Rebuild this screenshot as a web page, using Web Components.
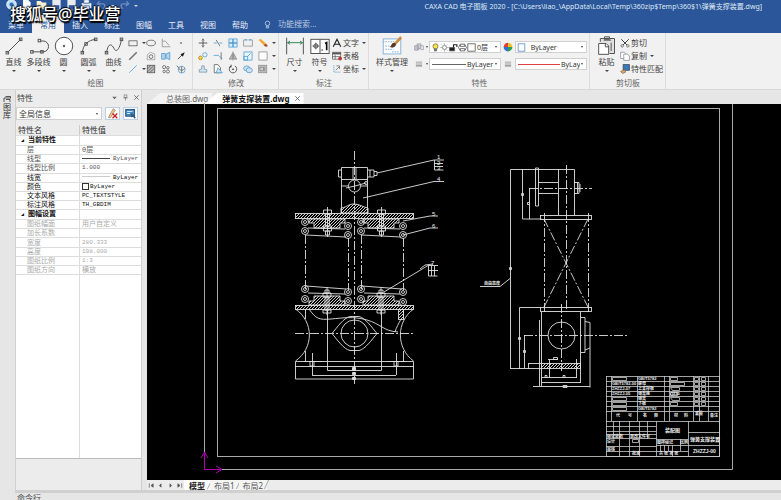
<!DOCTYPE html>
<html lang="zh-CN">
<head>
<meta charset="utf-8">
<title>CAXA CAD 电子图板 2020</title>
<style>
html,body{height:100%;margin:0}
body{font:8px/10px "Noto Sans","Noto Sans CJK SC",sans-serif;color:#444;background:#e6e6e6;overflow:hidden}
</style>
</head>
<body>
<cad-app></cad-app>
<script>
const g='#555',b='#4a9ad0';
const ICONS={
line:'<path d="M4 20L20 4"/><rect x="2.500" y="18.500" width="3" height="3"/><rect x="18.500" y="2.500" width="3" height="3"/>',
pline:'<path d="M4 19h13a6 6 0 0 0 0-13H14"/><rect x="2" y="17.500" width="3" height="3"/><rect x="14" y="17.500" width="3" height="3"/><rect x="11" y="4" width="3" height="3"/>',
circle:'<circle cx="12" cy="12" r="10.500" fill="#fff"/><circle cx="12" cy="12" r="1" fill="#444"/>',
arc:'<path d="M4 20C5 10 11 5 20 4"/><rect x="2.500" y="18.500" width="3" height="3"/><rect x="7" y="8" width="3" height="3"/><rect x="18.500" y="2.500" width="3" height="3"/>',
curve:'<path d="M3 20C5 8 9 9 12 15S19 15 21 4"/><rect x="1.500" y="18.500" width="3" height="3"/><rect x="19.500" y="2.500" width="3" height="3"/>',
dim:'<path d="M2 2v20M22 2v20"/><path d="M3 8h18M6 6L3 8l3 2M18 6l3 2-3 2" stroke="#3c8a5c"/>',
sym:'<rect x="1" y="4" width="22" height="17" fill="#fff"/><path d="M12 4v17M3 12h8M7 8v8"/><circle cx="7" cy="12" r="2.500"/><path d="M14 17h1M18 9l2-1v9" stroke="#111" stroke-width="2"/>',
style:'<rect x="1.500" y="3.500" width="21" height="18" fill="#fff" stroke="#8ab4d8"/><path d="M1 7h14M4 12h5M4 16h10M12 19h8" stroke="#8ab4d8" stroke-dasharray="2 1"/><path d="M22 0l-8 9 2 2 8-8z" fill="#d08a3c" stroke="none"/><path d="M15 8c-4 0-3 4-6 5 3 2 7 1 8-3z" fill="#553a2c" stroke="none"/>',
paste:'<path d="M4 7V3h17v18h-6M9 4V1h6v3z" fill="#e2e2e2"/><path d="M8 5h9M17 8v10"/><path d="M2 9h9l3 3v10H2z" fill="#fff"/><path d="M10 9v4h4"/>',
rect:`<rect x="1.500" y="4.500" width="13" height="8"/>`,
hatchline:'<path d="M2 14L14 2" stroke="#777" stroke-width="2.500"/>',
ray:`<path d="M2 14L14 2" stroke="${b}"/>`,
ellipse:'<ellipse cx="8" cy="8" rx="7" ry="4.500"/>',
region:'<path d="M2 14V6l5-4 7 3v9z" stroke="#999"/><circle cx="8" cy="9" r="3"/>',
hatch:'<rect x="2" y="2" width="12" height="12" fill="#bbb"/><path d="M2 8l6-6M2 13L13 2M6 14l8-8"/>',
angle:'<path d="M2 1v13h13M2 5h5l6 7" stroke="#888"/>',
fill:`<path d="M1 4h6v9H1zM8 5l6-3v12l-6-3z" fill="#b8d4e8" stroke="${b}"/>`,
gears:`<circle cx="5" cy="5" r="2.500"/><circle cx="11" cy="6" r="2"/><circle cx="5" cy="12" r="2"/><circle cx="11" cy="12" r="2.500"/>`,
point:'<circle cx="8" cy="8" r="1.200" fill="#222" stroke="none"/>',
arrow:'<path d="M3 13L12 4" stroke="#222"/><path d="M14 2L7 5l4 4z" fill="#222" stroke="none"/>',
globe:`<circle cx="9" cy="9" r="5.500" stroke="${b}"/><path d="M4 8c4 3 8 2 10-1M9 4v10M1 3l5 4"/>`,
move:'<path d="M8 1v14M1 8h14" stroke="#333"/><path d="M6 4l2-2 2 2M6 12l2 2 2-2"/>',
trim:`<path d="M1 8h5M10 8h5" stroke="${b}"/><path d="M5 3l6 10" stroke="#555"/>`,
array:`<rect x="1.500" y="1.500" width="6" height="6" fill="#dceefa" stroke="${b}"/><rect x="8.500" y="1.500" width="6" height="6" fill="#dceefa" stroke="${b}"/><rect x="1.500" y="8.500" width="6" height="6" fill="#dceefa" stroke="${b}"/><rect x="8.500" y="8.500" width="6" height="6" fill="#dceefa" stroke="${b}"/>`,
brk:`<path d="M5 3H1v10h14V3h-4" stroke="#888"/><path d="M4 3h3M9 3h3" stroke="${b}" stroke-width="2"/>`,
eraser:'<path d="M1 3l3-2 10 9-3 3z" fill="#f0a830" stroke="none"/><path d="M9 11l3 3 4-1-3-4z" fill="#a0522d" stroke="none"/>',
copy2:`<circle cx="4" cy="11" r="3" fill="#f4d040" stroke="#b08a10"/><circle cx="11" cy="6" r="3.500" stroke="${b}"/>`,
extend:`<path d="M1 7h8M9 7l6 6" stroke="${b}"/><path d="M13 2v12"/>`,
mirror:'<path d="M8 1v14"/><path d="M7 4v9H2zM9 4v9h5z" fill="#bbb" stroke="#888"/>',
scale:`<rect x="1.500" y="1.500" width="13" height="13" fill="#e6f4fc" stroke="${b}"/><rect x="1.500" y="8.500" width="6" height="6" stroke="${b}"/><path d="M8 8l4-4" stroke="${b}"/>`,
box:'<rect x="1.500" y="1.500" width="13" height="13" fill="#fff" stroke="#888"/>',
stretch:`<path d="M2 13h12V9l-4-1V3H6v5L2 9z" fill="#cfe2ef" stroke="#7a94a8"/>`,
offset:`<path d="M2 1h6l4 5v8H2z" fill="#fff"/><path d="M5 14l3-8 7 8z" fill="#cfe2ef" stroke="${b}"/>`,
rotate:'<path d="M5 3a6 6 0 1 0 6 0" stroke="#333"/><path d="M5 1v4H2" stroke="#333"/><circle cx="8" cy="8.500" r="1" fill="#333"/>',
block:`<ellipse cx="6" cy="7" rx="5" ry="4" fill="#cfe2ef" stroke="${b}"/><ellipse cx="10" cy="10" rx="5" ry="4" fill="#cfe2ef" stroke="${b}"/>`,
frame:'<rect x="1" y="2" width="13" height="12" fill="#ccc" stroke="#888"/><path d="M3 5h6v6H3zM11 4v8" stroke="#777"/>',
A:'<path d="M2 14L8 2l6 12M4 10h8" stroke="#222" stroke-width="1.800"/>',
table:'<rect x="1" y="2" width="13" height="11" fill="#fff"/><path d="M1 4h13" stroke-width="3"/><path d="M5 6v7M1 9h13"/><circle cx="13" cy="12" r="3" fill="#b33" stroke="none"/>',
coord:`<path d="M3 2v11h11" stroke="${b}" stroke-dasharray="2 1"/><path d="M6 10l6-6M7 3h5v5" stroke="#666"/>`,
layers:'<path d="M1 6h6v7H1zM5 3h6v8H5z" fill="#c8ccd4" stroke="#99a"/><path d="M11 6h4v6h-4" stroke="#99a"/>',
lines:'<path d="M3 5h10M3 8h10" stroke="#888"/><path d="M3 11h10" stroke="#888" stroke-width="2"/>',
bulb:'<circle cx="8" cy="6" r="4.500" fill="#ffe640"/><path d="M6 11h4v3H6z" fill="#777"/>',
idea:'<circle cx="8" cy="6" r="4" stroke="#dce6f4"/><path d="M6 11h4v3H6z" stroke="#dce6f4"/>',
sun:'<circle cx="8" cy="8" r="3.500"/><path d="M8 1v2M8 13v2M1 8h2M13 8h2M3 3l1 1M12 12l1 1M3 13l1-1M12 4l1-1"/>',
lock:'<path d="M1 8h9v6H1z" fill="#222"/><path d="M8 8V3h6v4" stroke="#222" stroke-width="2"/>',
printer:'<ellipse cx="8" cy="8" rx="7" ry="5" stroke="#333"/><path d="M4 2h8v4H4zM4 10h8v4H4z" fill="#fff" stroke="#333"/>',
sq:'<rect x="1.500" y="1.500" width="13" height="13" fill="#fff" stroke="#333"/>',
bsq:'<rect x="2" y="1.500" width="12" height="13" fill="#fff" stroke="#3a78c0"/>',
wheel:'<path d="M8 8L8 1A7 7 0 0 1 15 8z" fill="#e8c030" stroke="none"/><path d="M8 8H15A7 7 0 0 1 8 15z" fill="#30a050" stroke="none"/><path d="M8 8V15A7 7 0 0 1 1 8z" fill="#3070d0" stroke="none"/><path d="M8 8H1A7 7 0 0 1 8 1z" fill="#e04030" stroke="none"/>',
cut:'<path d="M2 2l9 9M14 2L5 11" stroke="#444" stroke-width="1.600"/><circle cx="3.500" cy="12.500" r="2"/><circle cx="12.500" cy="12.500" r="2"/>',
copy:'<path d="M1 2h6l2 2v8H1z" fill="#fff" stroke="#889"/><path d="M6 5h6l3 3v7H6z" fill="#fff" stroke="#889"/>',
match:'<rect x="5" y="1" width="10" height="9" fill="#3c78b8" stroke="#345"/><path d="M1 12l6-3 2 4-5 2z" fill="#e0b060" stroke="#865"/>',
doc:'<path d="M3 1h7l4 4v11H3z" fill="#fff" stroke="none"/>',
folder:'<path d="M1 3h6l2 2h6v10H1z" fill="#f4f0d0" stroke="none"/>',
save:'<path d="M2 1h12v14H2z" fill="#e8eaf0" stroke="none"/><path d="M4 9h8v6H4z" fill="#2b579a" stroke="none"/>',
print:'<path d="M1 6h14v7H1z" fill="#e8eaf0" stroke="none"/><path d="M4 1h8v5H4zM4 10h8v5H4z" fill="#fff" stroke="#2b579a"/>',
undo:'<path d="M5 3L2 7l4 3M2 7h8c4 0 4 6 0 7" stroke="#6d8cc0" stroke-width="2"/>',
redo:'<path d="M11 3l3 4-4 3M14 7H6c-4 0-4 6 0 7" stroke="#6d8cc0" stroke-width="2"/>',
orb:'<circle cx="8" cy="8" r="7" fill="#bfe0f8" stroke="#fff"/><circle cx="8" cy="8" r="3" fill="#2c74c0" stroke="none"/>',
down:'<path d="M3 6h10l-5 6z" fill="#666" stroke="none"/>',
pin:'<path d="M5 2h6v6H5zM3 9h10M8 9v6"/>',
x:'<path d="M3 3l10 10M13 3L3 13" stroke-width="1.800"/>',
pick:'<path d="M2 14L9 1l3 2-7 11z" fill="#f0c890" stroke="#a86"/><path d="M8 8l7 7M15 8l-7 7" stroke="#c22" stroke-width="2"/>',
filter:'<rect x="1" y="2" width="13" height="10" fill="#3c8ac8" stroke="#246"/><path d="M3 5h8M3 8h5" stroke="#fff"/><path d="M8 8l7 7M9 13l5-4" stroke="#357" stroke-width="2"/>',
rail:'<path d="M2 14V6h12M5 3h10v4M6 9h8v5" stroke="#333" stroke-width="1.600"/>',
first:'<path d="M4 4v8"/><path d="M11 5v6L7 8z" fill="#555"/>',prev:'<path d="M9 5v6L6 8z" fill="#555"/>',
next:'<path d="M7 5v6l3-3z" fill="#555"/>',last:'<path d="M12 4v8"/><path d="M5 5v6l4-3z" fill="#555"/>'
};
const BIG=new Set(['line','pline','circle','arc','curve','dim','sym','style','paste']);
function define(name,html,setup){
  customElements.define(name,class extends HTMLElement{
    constructor(){super();this.attachShadow({mode:'open'})}
    connectedCallback(){
      if(this.shadowRoot.childNodes.length)return;
      const t=document.createElement('template');
      t.innerHTML=typeof html==='function'?html(this):html;
      this.shadowRoot.append(t.content.cloneNode(true));
      if(setup)setup(this);
    }
  });
}
const BTN='button{font:inherit;color:inherit;background:none;border:0;padding:0;margin:0;cursor:pointer}';
const CARET='.caret{border:2px solid transparent;border-top-color:#444;border-bottom:0;width:0;height:0;flex:none}';
define('ui-icon',e=>{const n=e.getAttribute('name'),v=BIG.has(n)?24:16;return `<style>:host{display:block;width:var(--s,12px);height:var(--s,12px);flex:none}svg{display:block;width:100%;height:100%}</style><svg viewBox="0 0 ${v} ${v}" fill="none" stroke="${g}" stroke-width="1.200" aria-hidden="true">${ICONS[n]}</svg>`});

define('title-bar',`<style>:host{display:flex;height:15px;justify-content:space-between;color:#dfe7f3;padding:0 19px 0 6px}
${BTN} nav{display:flex;gap:4px;overflow:hidden;align-items:flex-start}button{--s:11px;margin-top:-1px}p{margin:0;padding-top:2px;white-space:nowrap;font-size:7px}
.caret{border:2px solid transparent;border-top-color:#cdd8ea;border-bottom:0;height:0;margin-top:5px}</style>
<nav>${['orb','doc','folder','save','save','print','undo'].map(n=>`<button aria-label="${n}"><ui-icon name="${n}"></ui-icon></button>`).join('')}<i class="caret"></i><button aria-label="redo"><ui-icon name="redo"></ui-icon></button><i class="caret"></i></nav>
<p>CAXA CAD 电子图板 2020 - [C:\\Users\\liao_\\AppData\\Local\\Temp\\360zip$Temp\\360$1\\弹簧支撑装置.dwg]</p>`);

define('menu-bar',`<style>:host{display:flex;height:18px;color:#e8eef8}${BTN}
button{width:32px;padding:3px 0 1px}button:first-child{padding-right:4px}.on{background:#f1f1f1;color:#2b579a}
label{display:flex;align-items:center;gap:6px;padding:0 0 0 7px;--s:9px}input{font:inherit;color:#c9d6ea;background:none;border:0;padding:0;width:60px;outline:0}input::placeholder{color:#b9c8e0}</style>
${['菜单','常用','插入','标注','图幅','工具','视图','帮助'].map((t,i)=>`<button class="${i==1?'on':''}">${t}</button>`).join('')}<label><ui-icon name="idea"></ui-icon><input placeholder="功能搜索..." aria-label="功能搜索"></label>`);

define('ribbon-group',e=>`<style>:host{display:flex;flex-direction:column;border-right:1px solid #dcdcdc;padding:3px 2px 0 var(--l,3px)}
.c{display:flex;height:41px}h2{font:inherit;text-align:center;margin:1px 0 0;color:#666}</style><div class="c"><slot></slot></div><h2>${e.getAttribute('label')}</h2>`);

define('tool-button',e=>`<style>:host{display:block;width:var(--w,25px)}${BTN}${CARET}
button{width:100%;height:100%;display:flex;flex-direction:column;align-items:center;white-space:nowrap;--s:20px}.t{margin-top:1px}.caret{margin-top:3px}</style>
<button><ui-icon name="${e.getAttribute('icon')}"></ui-icon><span class="t"><slot></slot></span><i class="caret"></i></button>`);

define('tool-grid',e=>{const items=e.getAttribute('icons').split(' ');return `<style>:host{display:grid;grid-template-columns:${e.getAttribute('cols')};grid-template-rows:repeat(3,13px);padding-top:0}${BTN}${CARET}
button{display:flex;align-items:center;justify-content:flex-start;gap:4px;padding-left:2px;--s:10px}</style>${items.map(n=>{const d=n.endsWith('+'),k=n.replace('+','');return `<button aria-label="${k}"><ui-icon name="${k}"></ui-icon>${d?'<i class="caret"></i>':''}</button>`}).join('')}`});

define('tool-list',e=>`<style>:host{display:grid;grid-template-rows:repeat(3,13px)}${BTN}${CARET}
button{display:flex;align-items:center;gap:1px;--s:10px;white-space:nowrap}.caret{margin-left:2px}</style>${e.getAttribute('items').split(' ').map(s=>{const[n,t,d]=s.split(':');return `<button><ui-icon name="${n}"></ui-icon>${t}${d?'<i class="caret"></i>':''}</button>`}).join('')}`);

define('combo-box',e=>`<style>:host{display:flex;align-items:center;width:72px;height:12px;box-sizing:border-box;background:#fff;border:1px solid #d0d0d0;position:relative;--s:9px;padding-left:1px}
${CARET}select{appearance:none;flex:1;min-width:0;font:inherit;font-size:var(--f,7px);line-height:9px;color:#333;border:0;background:none;padding:0 0 0 1px;outline:0;height:10px}
.caret{margin:0 3px 0 1px;border-width:2px 1px 0}</style><slot></slot><select aria-label="${e.getAttribute('label')}"><option>${e.getAttribute('value')}</option></select><i class="caret"></i>`);

define('prop-tools',`<style>:host{display:grid;grid-template-columns:17px 72px 14px 72px;grid-template-rows:12px 12px;row-gap:5px;padding-top:5px;align-items:center}
${BTN}${CARET}button{display:flex;align-items:center;justify-content:center;gap:2px;--s:10px}button .caret{border-width:2px 1px 0}
.ln{width:34px;border-top:1px solid #666;margin-left:1px}.red{width:42px;border-color:#e04040}</style>
<button aria-label="图层"><ui-icon name="layers"></ui-icon><i class="caret"></i></button>
<combo-box label="图层" value="0层"><ui-icon name="bulb"></ui-icon><ui-icon name="sun"></ui-icon><ui-icon name="lock"></ui-icon><ui-icon name="printer"></ui-icon><ui-icon name="sq"></ui-icon></combo-box>
<button aria-label="颜色"><ui-icon name="wheel"></ui-icon></button>
<combo-box label="颜色" value="&nbsp; ByLayer"><ui-icon name="bsq"></ui-icon></combo-box>
<button aria-label="线型"><ui-icon name="lines"></ui-icon><i class="caret"></i></button>
<combo-box label="线型" value="ByLayer"><i class="ln"></i></combo-box>
<button aria-label="线宽"><ui-icon name="lines"></ui-icon></button>
<combo-box label="线宽" value="ByLayer"><i class="ln red"></i></combo-box>`);

define('ribbon-bar',`<style>:host{display:flex;height:57px;background:#f1f1f1;border-bottom:1px solid #d8d8d8;box-sizing:border-box}</style>
<ribbon-group label="绘图" style="--l:1px"><tool-button icon="line">直线</tool-button><tool-button icon="pline">多段线</tool-button><tool-button icon="circle">圆</tool-button><tool-button icon="arc">圆弧</tool-button><tool-button icon="curve">曲线</tool-button>
<tool-grid cols="18px 15px 15px 16px" icons="rect+ ellipse angle point hatchline region fill arrow ray+ hatch gears globe"></tool-grid></ribbon-group>
<ribbon-group label="修改"><tool-grid cols="15px 15px 15px 15px 20px" icons="move trim array brk eraser+ copy2 extend mirror scale box+ stretch offset rotate block frame+"></tool-grid></ribbon-group>
<ribbon-group label="标注"><tool-button icon="dim">尺寸</tool-button><tool-button icon="sym">符号</tool-button><tool-list items="A:文字:1 table:表格 coord:坐标:1"></tool-list></ribbon-group>
<ribbon-group label="特性"><tool-button icon="style" style="--w:40px">样式管理</tool-button><prop-tools></prop-tools></ribbon-group>
<ribbon-group label="剪切板"><tool-button icon="paste" style="--w:27px">粘贴</tool-button><tool-list items="cut:剪切 copy:复制:1 match:特性匹配"></tool-list></ribbon-group>`);

const ROWS=[['h','当前特性'],['n','层','0层'],['n','线型','<span class="l"></span>ByLayer'],['n','线型比例','1.000'],['k','线宽','<span class="l t"></span>ByLayer'],['k','颜色','<span class="q"></span>ByLayer'],['k','文本风格','PC_TEXTSTYLE'],['k','标注风格','TH_GBDIM'],['h','图幅设置'],['d','图纸幅面','用户自定义'],['d','加长系数',''],['d','宽度','280.333'],['d','高度','198.000'],['d','图纸比例','1:3'],['d','图纸方向','横放']];
define('property-panel',`<style>:host{display:flex;flex-direction:column;border:1px solid #cfcfcf;border-width:0 1px;background:#ececec;min-height:0}${BTN}${CARET}
header{display:flex;align-items:center;height:13px;padding:0 1px 1px 1px;gap:4px;--s:7px}h2{font:inherit;margin:0;flex:1}
.bar{display:flex;gap:3px;padding:2px 3px 5px 0;--s:11px}.bar combo-box{flex:1;--f:8px;width:auto;height:13px}.bar button{border:1px solid #b8cfe4;background:#fff;padding:0 1px}
.grid{flex:1;background:linear-gradient(#ddd,#ddd) 63px 0/1px 100% no-repeat #fff;border-bottom:1px solid #bbb;min-height:0}
table{width:100%;border-collapse:collapse;table-layout:fixed;height:150px;font-size:7px;line-height:8px}
th,td{padding:0 0 0 2px;text-align:left;font-weight:400;border-bottom:1px solid #ddd;white-space:nowrap}
th:first-child{width:61px}thead th{background:#ececec;color:#333;font-size:8px;height:10px}thead th+th{border-left:1px solid #ccc}
td{border-left:1px solid #ddd;font-family:"Liberation Mono","Noto Sans CJK SC",monospace;font-size:6px}
tbody th:first-child{padding-left:11px}.n{color:#555}.k{color:#111}.d{color:#aaa}.h{color:#111}tbody .h th:first-child{font-weight:700;padding-left:5px}.h small{font-size:3px;margin-right:4px;font-weight:400}
.l{display:inline-block;width:28px;border-top:1px solid #444;vertical-align:middle;margin-right:3px}.t{border-color:#ccc}.q{display:inline-block;width:5px;height:5px;border:1px solid #333;vertical-align:middle;margin-right:1px}
.c{font-size:7px}footer{height:31px}</style>
<header><h2>特性</h2><button aria-label="菜单"><ui-icon name="down"></ui-icon></button><button aria-label="固定"><ui-icon name="pin"></ui-icon></button><button aria-label="关闭"><ui-icon name="x"></ui-icon></button></header>
<div class="bar"><combo-box label="对象" value="全局信息"></combo-box><button aria-label="清除"><ui-icon name="pick"></ui-icon></button><button aria-label="过滤"><ui-icon name="filter"></ui-icon></button></div>
<div class="grid"><table><thead><tr><th>特性名</th><th>特性值</th></tr></thead><tbody>${ROWS.map(([c,n,v])=>`<tr class="${c}">${c=='h'?`<th colspan="2"><small>◢</small>${n}</th>`:`<th>${n}</th><td class="${/[层户横]/.test(v)?'c':''}">${v}</td>`}</tr>`).join('')}</tbody></table></div><footer></footer>`);

define('sheet-tabs',`<style>:host{display:flex;height:11px}${BTN}
button{position:relative;padding:0 4px 0 19px;height:100%;display:flex;align-items:center;color:#666;background:#f3f3f3;clip-path:polygon(13px 0,100% 0,100% 100%,0 100%)}.on{background:#fff;color:#111;font-weight:700;padding:0 3px 0 18px;margin-left:-8px;gap:4px;--s:7px}</style>
<button>总装图.dwg</button><button class="on">弹簧支撑装置.dwg <ui-icon name="x"></ui-icon></button>`);

define('layout-tabs',`<style>:host{display:flex;height:10px;background:#ececec}${BTN}nav{display:flex;--s:9px;width:37px;justify-content:space-between}
.t{position:relative;padding:0 4px;line-height:9px;color:#555;background:#f4f4f4}.t::after{content:"";position:absolute;right:0;top:0;height:9px;border-right:1px solid #aaa;transform:skewX(-25deg)}
.on{background:#fff;color:#222;font-weight:700;padding:0 5px}</style>
<nav>${['first','prev','next','last'].map(n=>`<button aria-label="${n}"><ui-icon name="${n}"></ui-icon></button>`).join('')}</nav><button class="t on">模型</button><button class="t">布局1</button><button class="t">布局2</button>`);

const coil=(x,y)=>`<circle cx="${x}" cy="${y}" r="3.500"/><circle cx="${x}" cy="${y}" r="1.500"/>`;
const bolt=(x,y)=>`<path d="M${x-4} ${y}h8v4h-8zM${x-2} ${y+4}h4v12h-4zM${x-4} ${y+16}h8v5h-8zM${x-2} ${y+21}h4v4h-4z"/><path d="M${x} ${y-3}v30"/>`;
const block=(x,y,d)=>`<path d="M${x-18} ${y}h36v${4*d}h-5v${5*d}h-26v${-5*d}h-5z" fill="url(#h)"/>`;
const rows=[376,381,386,391,396,401,406,411,421];
define('cad-drawing',`<style>:host{display:block;background:#000;min-height:0;overflow:hidden}svg{display:block;width:100%;height:100%}text{fill:#eee;stroke:none;font-family:"Liberation Sans","Noto Sans CJK SC",sans-serif}.d{stroke-dasharray:9 2 2 2}</style>
<svg viewBox="147 104 634 376" preserveAspectRatio="xMinYMin meet" fill="none" stroke="#e0e0e0" stroke-width="1" role="img" aria-label="弹簧支撑装置">
<defs><pattern id="h" width="3" height="3" patternUnits="userSpaceOnUse"><path d="M0 3L3 0" stroke="#ccc"/></pattern></defs>
<g stroke="#aaa"><path d="M204.500 104V469.500H732.500V104"/><rect x="217.500" y="108.500" width="502" height="348"/></g>
<g stroke="#b000b0"><path d="M204.500 469V452M201 458l3.500-6 3.500 6M204 469.500h18M216 466l6 3.500-6 3.500"/></g>
<g stroke-width=".9">
<path d="M341.500 213V167.500H367.500V213M338.500 170v7h3M338.500 170h3M368 170h6v7h-6M374 171.500h3v4h-3M370 170v7M353 167v12M356 167v12M341 179.500h27M341 186h7M361 186h7"/><circle cx="354.500" cy="186" r="6"/><path d="M346 188l9-2 11-3"/><circle cx="366" cy="183" r="1.500"/>
<path d="M341 213v-5c7-1 7-4 13-4s8 3 14 4v5z" fill="url(#h)"/>
<rect x="295.500" y="213.500" width="118" height="5" fill="url(#h)"/>
${block(327,219,1)}${block(381,219,1)}${bolt(327.5,210)}${bolt(381.5,210)}
${[[305,222],[305,231],[348,226],[348,235],[361,222],[361,231],[403,226],[403,235]].map(p=>coil(...p)).join('')}
<path d="M308 228l37 1M306 235l40 2M364 228l36 1M362 235l39 2"/>
${block(327,305,-1)}${block(381,305,-1)}
<g><path d="M323 293h8v4h-8zM325 297h4v13h-4zM323 310h8v3h-8zM327 287v28M377 293h8v4h-8zM379 297h4v13h-4zM377 310h8v3h-8zM381 287v28M325 290h4v3h-4zM379 290h4v3h-4z"/></g>
${[[305,289],[305,299],[348,292],[348,301],[361,289],[361,299],[403,292],[403,302]].map(p=>coil(...p)).join('')}
<path d="M306 286l40 3M308 293l37 1M362 286l40 3M364 293l36 1"/>
<rect x="295.500" y="305.500" width="118" height="4" fill="url(#h)"/>
<path class="d" d="M354.500 151V384M305.500 235V290M348.500 238V290M361.500 235V290M403.500 238V290M295 333.500H414"/>
<path d="M295.500 309C314 322 314 348 295.500 361M413.500 309C396 322 396 348 413.500 361M305.500 309v10M305.500 351v10M403.500 309v10M403.500 351v10"/>
<path d="M295.500 361.500h118V379h-118zM295 366.500h119M310 361v5h4v-5M394 361v5h4v-5M312.500 353v22M396.500 353v22M304 361.500h18M387 361.500h18"/>
<path d="M327.500 310v60.500h54V310M312 375.500h84"/>
<circle cx="354.500" cy="333.500" r="13.500"/><path d="M332 333.500c5-6 12-16 18-17h9c6 1 13 11 18 17-5 6-12 16-18 17h-9c-6-1-13-11-18-17z"/>
<path d="M309 309c7 10 10 11 22 10s22-3 36 1 16 11 31 12M401 319c-2 4-5 9-6 13"/><rect x="398.500" y="309.500" width="5" height="10" fill="url(#h)"/>
<path d="M352.500 367.500h3v3h-3zM352.500 372.500h3v2h-3zM352.500 377.500h3v2h-3z" fill="#ddd"/>
<path d="M377 173l57-13h10M434.500 160v10h9M434 163.500h9M434 166.500h9M363 198l71-16.500h10M403 221l27-5h8M403 235l27-7h8M384 292l44-26.500h10M428.500 266v10h9M431.500 266v10M434.500 266v10M428 270.500h10M420 269l5-4 8-1"/>
</g>
<g font-size="6"><text x="437" y="159">1</text><text x="437" y="165">2</text><text x="437" y="170">3</text><text x="437" y="181">4</text><text x="432" y="216">5</text><text x="432" y="228">6</text><text x="431" y="265">7</text></g>
<g stroke-width=".9">
<path d="M510.500 369V169.500H574.500V215M558.500 169v46M522.500 169v50h19M529.500 188v31M535.500 168v38h3v-38zM538 182.500h20M538 193.500h20M574 182.500h5v11h-5M577.500 182v11M580 184v8"/>
<rect x="540.500" y="215.500" width="51" height="4"/><rect x="540.500" y="307.500" width="51" height="4"/>
<path class="d" d="M566.500 165V312M544.500 213V312M588.500 213V312M529 188.500h63M544 219l44 88M588 219l-44 88M561.500 304v67M524 335.500H628"/>
<path d="M519.500 369v-61.500h21M524.500 335v33M510 368.500h31M541.500 312v74M539.500 320v66M580.500 312v70M581 317.500h4v35h-4M585 321.500l5 1v65M590 348l-5 2"/>
<circle cx="561.500" cy="335.500" r="13.500"/><rect x="541.500" y="363.500" width="39" height="5" fill="url(#h)"/>
<path d="M549.500 359v19M576.500 359v19M548 359.500h10M541 377.500h36M541 382.500h40M533 386.500h57M528 363.500h13M528.500 363v6"/>
<path d="M521.500 193.500h2v2h-2zM527.500 202.500h2v2h-2zM509.500 267.500h2v2h-2zM518.500 337.500h2v2h-2zM523.500 350.500h2v2h-2zM553.500 357.500h4v2h-4zM545 375.500h2v2h-2zM563 375.500h2v2h-2zM563 385.500h4v2h-4z"/>
<path d="M480 286.500h20l10-8"/></g><text x="484" y="285" font-size="4" font-weight="700">自由高度</text>
<g stroke="#ccc" stroke-width=".8"><path d="M606.500 376V457M719.500 376V457M606 456.500h114"/>
<path d="${rows.map(y=>`M606 ${y+.5}h114`).join('')}M611.500 376v45M637.500 376v45M664.500 376v45M669.500 376v45M693.500 376v45M699.500 376v45M708.500 376v45"/>
<path d="M656.500 421v35M688.500 421v35M606 426.500h50M606 431.500h50M606 434.500h50M606 438.500h50M606 446.500h50M606 451.500h50M613.500 421v18M619.500 421v35M629.500 421v35M639.500 421v35M647.500 421v18M656 439.500h32M656 445.500h32M656 451.500h32M660.500 445v6M664.500 445v6M668.500 445v6M672.500 445v11M680.500 439v12M688 432.500h32M688 445.500h32"/>
<path d="${[377.5,397.5,402.5,407.5].map(y=>`M612.500 ${y}h14v3h-14z`).join('')}${[377.5,387.5,392.5,397.5,402.5].map((y,i)=>`M670.500 ${y}h${i%2?9:7}v3h-7z`).join('')}M670.500 382.500h14v3h-14z${[377.5,382.5,387.5,392.5,397.5,402.5].map(y=>`M694.500 ${y}h4v3h-4zM701.500 ${y}h4v3h-4z`).join('')}M632.500 439.500h6v3h-6z"/></g>
<g font-size="4" font-weight="700"><text x="638" y="380">GB/T5782</text><text x="612" y="385">GB/T5782-00</text><text x="638" y="385">螺母</text><text x="638" y="390">上支撑板</text><text x="612" y="390">ZHZZJ-07</text><text x="612" y="395">ZHZZJ-05</text><text x="638" y="395">弹簧座</text><text x="638" y="400">弹簧</text><text x="638" y="405">下板</text><text x="638" y="410">GB/T5782</text><text x="670" y="395">Q235</text>
<text x="616" y="417">代</text><text x="628" y="417">号</text><text x="643" y="417">名</text><text x="654" y="417">称</text><text x="674" y="417">材</text><text x="684" y="417">料</text><text x="695" y="415">重量</text><text x="710" y="417">备注</text><text x="607" y="438">标记处数</text><text x="630" y="438">更改文件号</text><text x="607" y="443">设计</text><text x="607" y="451">审核</text><text x="632" y="455">批准</text><text x="657" y="444">图样标记</text><text x="680" y="444">比例</text><text x="659" y="455">共 张 第 张</text></g>
<g font-size="5" font-weight="700"><text x="665" y="432">装配图</text><text x="690" y="441">弹簧支撑装置</text><text x="693" y="453">ZHZZJ-00</text></g>
</svg>`);

define('cad-app',`<style>:host{display:flex;flex-direction:column;height:100vh;position:relative}
.top{background:#2b579a}.mark{position:absolute;left:10px;top:5px;margin:0;font-size:16px;line-height:18px;font-weight:500;color:#fff;text-shadow:1px 1px 1px #000,-1px 0 1px #000,0 -1px 1px #000,1px 2px 1px #000}
main{flex:1;display:grid;grid-template-columns:15px 127px minmax(0,1fr);min-height:0;background:#e6e6e6}
aside{padding:5px 4px 0 3px;--s:8px;line-height:8px;color:#333}.work{display:grid;grid-template-rows:11px minmax(0,1fr) 10px;padding:3px 0 0 5px;min-height:0}
property-panel{padding-top:1px}.cmd{border-top:3px solid #d0d0d0;margin-left:15px;height:7px;padding-left:2px;overflow:hidden}</style>
<div class="top"><title-bar></title-bar><menu-bar></menu-bar></div><ribbon-bar></ribbon-bar>
<main><aside><ui-icon name="rail"></ui-icon>图库</aside><property-panel></property-panel><div class="work"><sheet-tabs></sheet-tabs><cad-drawing></cad-drawing><layout-tabs></layout-tabs></div></main>
<div class="cmd">命令行</div><p class="mark">搜狐号@毕业营</p>`);
</script>
</body>
</html>
